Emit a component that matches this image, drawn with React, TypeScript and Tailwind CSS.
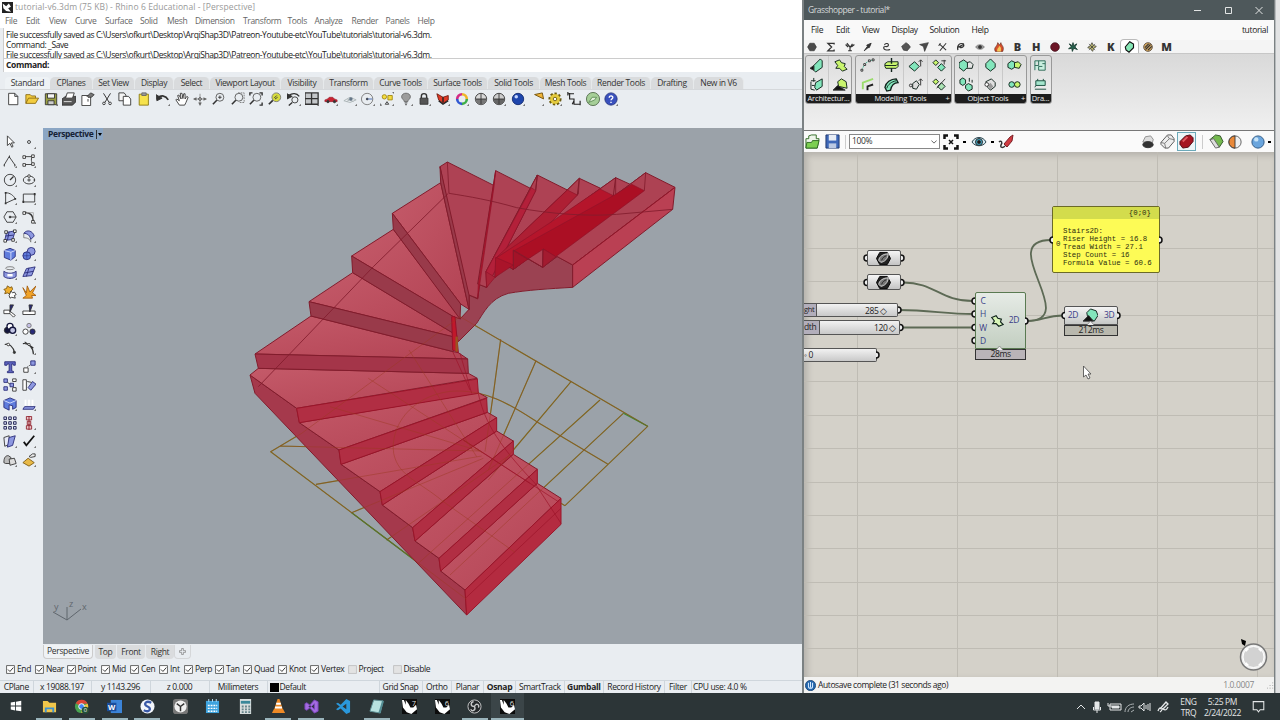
import React from "react";

type Cell = [string, string];

const Svg = ({
  children,
  className = "w-4 h-4",
}: {
  children: React.ReactNode;
  className?: string;
}) => (
  <svg viewBox="0 0 16 16" className={`shrink-0 ${className}`} fill="none" stroke="#333" strokeWidth="1">
    {children}
  </svg>
);

const Corner = () => <path d="M17 12.500V17H12.500Z" fill="#777" stroke="none" />;

const Lens = () => (
  <>
    <circle cx="9" cy="6" r="4.500" stroke="#555" />
    <path d="M5.500 9.500L1 14" strokeWidth="1.800" />
  </>
);

const menuItems: Cell[] = [
  ["File", "w-[21px]"],
  ["Edit", "w-[23px]"],
  ["View", "w-[26px]"],
  ["Curve", "w-[30px]"],
  ["Surface", "w-[35px]"],
  ["Solid", "w-[27px]"],
  ["Mesh", "w-[28px]"],
  ["Dimension", "w-[48px]"],
  ["Transform", "w-[44.500px]"],
  ["Tools", "w-[27px]"],
  ["Analyze", "w-[37px]"],
  ["Render", "w-[34px]"],
  ["Panels", "w-[32px]"],
  ["Help", "w-[24px]"],
];

const toolTabs: Cell[] = [
  ["CPlanes", "w-[43px]"],
  ["Set View", "w-[42px]"],
  ["Display", "w-[39px]"],
  ["Select", "w-[36px]"],
  ["Viewport Layout", "w-[71px]"],
  ["Visibility", "w-[43px]"],
  ["Transform", "w-[50px]"],
  ["Curve Tools", "w-[54px]"],
  ["Surface Tools", "w-[60px]"],
  ["Solid Tools", "w-[52px]"],
  ["Mesh Tools", "w-[52px]"],
  ["Render Tools", "w-[59px]"],
  ["Drafting", "w-[43px]"],
  ["New in V6", "w-[50px]"],
];

const toolbarIcons: React.ReactNode[] = [
  <path d="M3 1.500H10L13.500 5V14.500H3ZM10 1.500V5H13.500" fill="#fff" />,
  <path d="M1 13V3H6L7.500 4.500H12V7M1 13L4 7H15.500L12 13Z" fill="#f2cc3f" stroke="#8d6c14" />,
  <>
    <path d="M1.500 2H14.500V14.500H1.500Z" fill="#9a9f42" />
    <path d="M4 2H12V7H4Z" fill="#f4f4f4" />
    <path d="M4.500 10H11.500V14.500H4.500Z" fill="#ccc" />
    <Corner />
  </>,
  <>
    <path d="M0 8L4 5H16V11L12 15H0Z" fill="#555" />
    <path d="M6 1H14L12 7H4Z" fill="#fff" />
    <path d="M2 11H11" stroke="#eee" />
  </>,
  <>
    <path d="M1 4H11V15.500H1Z" fill="#fff" />
    <path d="M7 5L11 1L15 3L12 6H8Z" fill="#777" />
    <path d="M8 8V11" />
  </>,
  <>
    <path d="M4 1.500L10.500 12M12 1.500L5.500 12" strokeWidth="1.100" />
    <circle cx="4.500" cy="13" r="1.500" />
    <circle cx="11.500" cy="13" r="1.500" />
  </>,
  <>
    <path d="M1 1H7L9 3.500V10H1Z" fill="#f4f4f4" />
    <path d="M6 5H12L14.500 8V15H6Z" fill="#fff" />
  </>,
  <>
    <path d="M2.500 2.500H13V15H2.500Z" fill="#f6e24c" stroke="#87760f" />
    <path d="M5.500 1H10.500V4H5.500Z" fill="#999" stroke="#666" />
  </>,
  <>
    <path d="M2 7C6 3 11 4 14 9" strokeWidth="2" />
    <path d="M0 3L1 10L7 7Z" fill="#333" />
    <Corner />
  </>,
  <path d="M5 15L1 9L2 8L5 10L3 4L4.500 3.500L7 8L6 1.500H8L9 7.500L10 2H11.500L11.500 8L13.500 5L15 6L12.500 12L11 15Z" fill="#fff" />,
  <>
    <path d="M1 8H15M8 2V14" stroke="#888" />
    <path d="M0 8L4 6V10ZM16 8L12 6V10ZM8 16L6 12H10Z" fill="#666" stroke="none" />
    <circle cx="8" cy="8" r="1.500" fill="#eee" />
  </>,
  <>
    <Lens />
    <path d="M7 6H11M9 4V8" />
  </>,
  <>
    <Lens />
    <path d="M8 1H15V12H9" strokeDasharray="2 1" stroke="#777" />
  </>,
  <>
    <Lens />
    <path d="M1 4V1H4M12 1H15V4M15 12V15H12" strokeWidth="1.600" />
  </>,
  <>
    <circle cx="9.500" cy="6" r="5" fill="#d7dc3c" stroke="#777" />
    <path d="M5.500 9.500L1 14" strokeWidth="2" />
    <path d="M7 7L10 4M8 8L11 6" />
  </>,
  <>
    <circle cx="9" cy="9" r="3.500" />
    <path d="M6 12L2 15.500M2 4C6 1 11 1 14 5" strokeWidth="1.500" />
    <path d="M0 2V8L6 5Z" fill="#333" />
    <Corner />
  </>,
  <>
    <path d="M0 1H15V14H0ZM7.500 1V14M0 7.500H15" fill="#c4c7ca" strokeWidth="1.500" />
    <Corner />
  </>,
  <>
    <path d="M1 9L4 8L6 6H10L12 8L15 9V11H1Z" fill="#c82332" stroke="#8a1522" strokeWidth=".6" />
    <circle cx="4.500" cy="11" r="1.300" fill="#333" />
    <circle cx="12" cy="11" r="1.300" fill="#333" />
    <Corner />
  </>,
  <>
    <path d="M1 10L8 6L15 9L8 12ZM5 8L12 11M4 11L11 7" stroke="#aab3b5" />
    <circle cx="9" cy="8" r="2" fill="#678" stroke="none" />
    <Corner />
  </>,
  <>
    <circle cx="7" cy="8" r="6.500" stroke="#777" />
    <path d="M7 8H13" stroke="#3b62b0" />
    <circle cx="7" cy="8" r="1" fill="#3b62b0" />
    <Corner />
  </>,
  <>
    <circle cx="5" cy="5.500" r="2.500" fill="#f4dc3e" stroke="#a08610" />
    <path d="M9 4H14V9H9Z" fill="#f4dc3e" stroke="#a08610" />
    <path d="M14 0H16V2M0 13V15H2M6 14L8 11L10 14Z" />
    <Corner />
  </>,
  <>
    <path d="M6 11C6 9 3 8 3 5.500C3 0 13 0 13 5.500C13 8 10 9 10 11Z" fill="#9c9c9c" stroke="#666" />
    <path d="M6.500 12.500H9.500M7 14.500H9" />
    <Corner />
  </>,
  <>
    <path d="M5 7V4.500C5 1 11 1 11 4.500V7" strokeWidth="1.600" />
    <path d="M3.500 7H12.500V14H3.500Z" fill="#555" />
    <Corner />
  </>,
  <>
    <path d="M1 2L8 6L14 4V9L8 13L3 9Z" fill="#e03a26" stroke="#6e1b10" />
    <path d="M8 6V12M3 10L8 14L14 10" stroke="#222" strokeWidth="1.600" />
    <Corner />
  </>,
  <>
    <path d="M8 2.500A5.500 5.500 0 0 1 13.500 8" stroke="#f0b428" strokeWidth="3" />
    <path d="M13.500 8A5.500 5.500 0 0 1 8 13.500" stroke="#3fae49" strokeWidth="3" />
    <path d="M8 13.500A5.500 5.500 0 0 1 2.500 8" stroke="#3158d2" strokeWidth="3" />
    <path d="M2.500 8A5.500 5.500 0 0 1 8 2.500" stroke="#d32c86" strokeWidth="3" />
    <Corner />
  </>,
  <>
    <circle cx="8" cy="8" r="6.500" fill="#d8d8d8" stroke="#333" />
    <path d="M8 8H14.500A6.500 6.500 0 0 1 1.500 8Z" fill="#777" stroke="none" />
    <path d="M2 8H14M8 2V14" />
  </>,
  <>
    <circle cx="8" cy="8" r="6.500" fill="#ccc" stroke="#333" />
    <path d="M8 8H14.500A6.500 6.500 0 0 1 1.500 8Z" fill="#666" stroke="none" />
    <path d="M2 8H14M8 2V14" />
    <Corner />
  </>,
  <>
    <circle cx="8" cy="8" r="6.500" fill="#1e46ad" stroke="#122a70" />
    <circle cx="6" cy="5.500" r="2" fill="#c6d6ff" stroke="none" />
    <Corner />
  </>,
  <>
    <path d="M6 2H15V9Z" fill="#f2b63a" stroke="#75550e" transform="rotate(-12 10 6)" />
    <Corner />
  </>,
  <>
    <circle cx="8" cy="8" r="6" fill="#e5cb3e" stroke="#6a5a10" strokeWidth="3" strokeDasharray="2.500 2" />
    <circle cx="8" cy="8" r="5.500" fill="#e5cb3e" stroke="none" />
    <circle cx="8" cy="8" r="2" fill="#fff" stroke="#6a5a10" />
    <Corner />
  </>,
  <path d="M1 2H8M3 1V8H8V14H15M1 4V0M8 10L6 14M15 10V15" stroke="#222" strokeWidth="1.300" />,
  <>
    <circle cx="8" cy="8" r="7.500" fill="#a6cf98" stroke="#526b4b" />
    <path d="M3 12L7 6H12L10 9Z" fill="#e5f2df" stroke="#5a8a52" />
  </>,
  <>
    <circle cx="8" cy="8" r="7" fill="#3950bd" stroke="#263580" />
    <path d="M6 6.500C6 3.500 10.500 4 10 6.500C9.500 8 8 8 8 9.500M8 11V12.500" stroke="#fff" strokeWidth="1.600" />
    <Corner />
  </>,
];

const blue = "#8d98e0";
const navy = "#282a78";

const sideIcons: React.ReactNode[] = [
  <path d="M5 1V12L8 9.500L10 14L11.500 13L9.500 9H13Z" fill="#fff" />,
  <>
    <circle cx="8" cy="8" r="1.700" />
    <Corner />
  </>,
  <>
    <path d="M1 13L7 3L14 13" />
    <path d="M1 13h1M7 3h1M13 13h1" strokeWidth="2.500" />
    <Corner />
  </>,
  <>
    <path d="M2 3H12C9 6 12 12 13 12H2" />
    <path d="M1 2h3v3h-3zM11 1h3v3h-3zM1 11h3v3h-3zM11 10h3v3h-3z" fill="#fff" />
    <Corner />
  </>,
  <>
    <circle cx="8" cy="8" r="6.500" />
    <path d="M8 8L12 4" strokeWidth="1.500" />
    <Corner />
  </>,
  <>
    <ellipse cx="8" cy="8" rx="6.500" ry="4.500" />
    <circle cx="8" cy="3.500" r="1.500" fill="#fff" />
    <path d="M8 6V10M6 8H10M13 8h2" />
    <Corner />
  </>,
  <>
    <path d="M3 14V2C8 2 12 5 14 9Z" />
    <path d="M2 14h2M2 2h2M13 9h2" strokeWidth="2" />
    <Corner />
  </>,
  <>
    <path d="M1.500 3.500H14.500V12.500H1.500Z" />
    <path d="M0.500 12.500h2M13.500 3.500h2" strokeWidth="2.500" />
    <Corner />
  </>,
  <>
    <path d="M4.500 2H11.500L15 8L11.500 14H4.500L1 8Z" />
    <path d="M8 8H15" />
    <circle cx="8" cy="8" r="1" fill="#333" />
    <Corner />
  </>,
  <>
    <path d="M2 3C9 2 13 6 13 14" strokeWidth="1.800" />
    <path d="M1 2h3v3h-3zM11 12h3v3h-3z" fill="#fff" />
    <path d="M5 3H13V11" stroke="#aaa" />
    <Corner />
  </>,
  <>
    <path d="M4 4L14 2L11 12L2 13Z" fill={blue} stroke={navy} />
    <path d="M7 3L5 13M3 8L12 7" stroke={navy} />
    <path d="M2 2h3v3h-3zM12 1h3v3h-3zM10 11h3v3h-3zM1 12h3v3h-3z" fill="#fff" />
    <Corner />
  </>,
  <>
    <path d="M2 5C6 0 12 2 14 8L10 12C9 7 6 5 2 5Z" fill={blue} stroke={navy} />
    <path d="M2 5V10C6 10 9 11 10 15V12" stroke="#777" />
    <Corner />
  </>,
  <>
    <path d="M1.500 4L8 1.500L14 4V11L9 15L1.500 12Z" fill="#5f7cdd" stroke={navy} />
    <path d="M1.500 4L9 6L14 4M9 6V15" stroke="#dde3ff" />
    <Corner />
  </>,
  <>
    <circle cx="10.500" cy="5" r="4.500" fill={blue} stroke={navy} />
    <circle cx="5.500" cy="10" r="4.500" fill="#5f7cdd" stroke={navy} />
    <path d="M1 10H10M5.500 5.500V14" stroke={navy} strokeWidth=".6" />
    <Corner />
  </>,
  <>
    <ellipse cx="8" cy="2.500" rx="5" ry="1.700" stroke="#777" />
    <path d="M1 6C5 9 11 9 15 6V12C11 15 5 15 1 12Z" fill={blue} stroke={navy} />
    <path d="M5 10.500H11" stroke="#fff" strokeWidth="3" />
    <Corner />
  </>,
  <>
    <path d="M1 12L5 3L15 1L11 11Z" fill={blue} stroke={navy} />
    <path d="M3 8L13 6M8 2L5 12" stroke={navy} />
    <Corner />
  </>,
  <>
    <path d="M5 1L8 3L10 2L11 5L9 7L10 10H7L5 9L2 10L3 7L1 5L4 4Z" fill="#efaf2e" stroke="#7e560d" />
    <path d="M9 7L11 9L13 8L15 11L13 12L14 15L10 14L8 15L7 12Z" fill="#fff" />
  </>,
  <path d="M1 3L5 9L6 1L9 8L16 1L12 9L16 12L11 12L12 15H1L5 12Z" fill="#f0a227" stroke="#a55f10" />,
  <>
    <path d="M1 7H8V11H1ZM9 9L14 13L12 15L8 11" fill="#fff" />
    <path d="M8 1H12L8 9Z" fill={navy} />
  </>,
  <>
    <path d="M1 8H15V12H1Z" fill="#fff" />
    <path d="M8 1H12L9 9Z" fill={navy} />
  </>,
  <>
    <circle cx="5" cy="9.500" r="3.500" fill="#14163c" />
    <circle cx="8" cy="5" r="3.500" fill="#fff" stroke="#14163c" strokeWidth="1.500" />
    <circle cx="11" cy="9.500" r="3.500" fill="#c3c6e4" stroke="#14163c" strokeWidth="1.500" />
    <Corner />
  </>,
  <>
    <circle cx="8" cy="4" r="2.500" fill="#c3bfe4" stroke="#777" />
    <circle cx="4" cy="11" r="3" fill="#fff" />
    <circle cx="12" cy="11" r="3" fill={navy} />
  </>,
  <>
    <path d="M2 4C7 2 12 7 13 13" strokeWidth="1.300" />
    <circle cx="6" cy="4" r="1.500" fill="#fff" />
    <circle cx="13" cy="13" r="1.300" fill="#333" />
  </>,
  <>
    <path d="M1 3C8 2 13 8 13 15M3 1L13 8" strokeWidth="1.300" />
    <circle cx="8" cy="4" r="1.300" fill="#fff" />
    <Corner />
  </>,
  <path d="M2 2H14V6H12L11.500 4.500H10V12.500L12 13V14.500H5V13L7 12.500V4.500H5L4.500 6H2Z" fill="#5f66c0" stroke={navy} />,
  <>
    <path d="M2 9H7V14H2Z" fill="#fff" />
    <path d="M10 1H15V6H10Z" fill={blue} stroke={navy} />
    <path d="M6 8L9 6" strokeDasharray="1.500 1" />
    <Corner />
  </>,
  <>
    <path d="M1 1H5V5H1ZM8 6H12V10H8ZM1 10H5V14H1Z" fill={blue} stroke={navy} />
    <path d="M11 11H15V15H11ZM11 1H15V4H11Z" fill="#fff" />
    <path d="M5 5L8 7" />
  </>,
  <>
    <path d="M1 2H5V14H1Z" fill="#fff" />
    <path d="M12 4L16 7L10 14L7 11Z" fill={blue} stroke={navy} />
    <path d="M6 4L11 5" />
  </>,
  <>
    <path d="M1 4L8 1L15 4V12L11 14V10L7 9V15L1 12Z" fill="#5f7cdd" stroke={navy} />
    <path d="M1 4L8 7L15 4" stroke="#dde3ff" />
    <Corner />
  </>,
  <>
    <path d="M1 14L3 11H15L13 14Z" fill={blue} stroke={navy} />
    <path d="M4 10V3M8 10V3M12 10V3" stroke="#fff" strokeWidth="2" />
    <Corner />
  </>,
  <path d="M1 1h3v3h-3zM6.500 1h3v3h-3zM12 1h3v3h-3zM1 6.500h3v3h-3zM6.500 6.500h3v3h-3zM12 6.500h3v3h-3zM1 12h3v3h-3zM6.500 12h3v3h-3zM12 12h3v3h-3z" fill="#cdd2f0" stroke="#1c1e4c" />,
  <>
    <path d="M5 0.500H11V4.500H5ZM6 6H10V10H6ZM5 11H11V15H5Z" fill="#e9c6ca" stroke="#90202c" />
    <path d="M8 0V16" stroke="#90202c" />
    <Corner />
  </>,
  <>
    <path d="M1 4L7 2V12L2 14Z" fill="#e7eaf8" />
    <path d="M7 4L14 2L11 13L5 15Z" fill={blue} stroke={navy} />
    <Corner />
  </>,
  <>
    <path d="M2 9L5 13L14 2" stroke="#111" strokeWidth="2" />
    <Corner />
  </>,
  <>
    <path d="M1 11C1 5 3 3 6 3L9 5V12H3Z" fill="#bbb" />
    <path d="M7 7L13 6L15 12L8 14Z" fill="#ddd" />
    <Corner />
  </>,
  <>
    <path d="M1 11L7 6L14 11L8 15Z" fill="#e8b947" stroke="#7d5a14" />
    <path d="M8 4L12 1H15V4L10 5Z" fill="#eee" />
    <Corner />
  </>,
];

const ghTabs: React.ReactNode[] = [
  <path d="M4.500 2H11.500L15 8L11.500 14H4.500L1 8Z" fill="#4a4a4a" />,
  <path d="M13 4V2H3L9 8L3 14H13V12" strokeWidth="2" />,
  <path d="M8 14V8L3 2M8 9L12 3M1 4L5 8M15 4L10 8M5 14H11" strokeWidth="1.900" />,
  <path d="M2 14L7 7L6 5L13 2L10 9L8 9Z" fill="#333" strokeWidth="1.500" />,
  <path d="M4 5C5 1 12 2 10 6C7 9 6 6 3 8C1 12 8 14 13 12" strokeWidth="1.700" />,
  <path d="M1 7L8 1L12 4L15 8L10 14L4 13Z" fill="#555" />,
  <path d="M1 4L15 1L9 15L7 7Z" fill="#4a4a4a" />,
  <path d="M2 3L13 13M13 2L8 8L3 14M1 6L4 2" strokeWidth="1.700" />,
  <path d="M3 13C1 5 6 1 12 3C14 7 9 11 6 8L9 6M2 9L12 4" strokeWidth="1.900" />,
  <>
    <path d="M1 8C4 3 12 3 15 8C12 13 4 13 1 8Z" fill="#999" stroke="#777" />
    <circle cx="8" cy="8" r="2.500" fill="#333" />
  </>,
  <>
    <path d="M2 15C-1 8 5 8 6 1L9 5L11 1C12 6 17 7 14 15Z" fill="#d6502b" stroke="#5c2115" />
    <path d="M5 15C5 9 8 10 8 6C12 9 11 10 11 15Z" fill="#f5c95a" stroke="none" />
  </>,
  "B",
  "H",
  <circle cx="8" cy="8" r="7" fill="#6b1525" stroke="#3c0c16" />,
  <path d="M8 1L9 6L14 3L11 8L15 12L9 10L7 15L6 10L1 11L5 7L2 3L7 6Z" fill="#24614c" stroke="#1e4236" strokeWidth="1.500" />,
  <path d="M8 1L10 5L15 7L11 10L9 15L6 11L1 9L5 6ZM8 2V14M2 8H14M3 3L13 13M13 3L3 13" fill="#eee88a" />,
  "K",
  <path d="M3 8L9 1L14 4V9L8 15L4 12Z" fill="#86e7b6" stroke="#111" strokeWidth="1.500" />,
  <>
    <circle cx="8" cy="8" r="7" fill="#d1a661" stroke="#34251a" />
    <path d="M3 9L9 3M4 12L12 4M8 13L14 7" strokeWidth="1.800" />
  </>,
  "M",
];

const mint = "#83e6bc";
const lime = "#c9f56e";
const ink = "#10231c";

const ribbon = [
  {
    title: "Architectur...",
    width: "w-[47px]",
    plus: false,
    cols: [
      [
        <>
          <path d="M4 8L11 1L13 3V10L6 15L4 13Z" fill={mint} stroke={ink} />
          <path d="M0 11L4 8V13Z" fill="#111" />
        </>,
        <>
          <path d="M6 6L13 2V10L7 14L5 11Z" fill={mint} stroke={ink} />
          <path d="M1 5V13L5 14M4 1V5M1 4H6M2 9H5" stroke={ink} />
        </>,
      ],
      [
        <path d="M2 4L7 2L9 5L13 6L12 9L15 12L10 14L7 11L3 11L5 8Z" fill={lime} stroke={ink} />,
        <>
          <path d="M6 10L5 5L9 2L14 5L15 12Z" fill={lime} stroke={ink} />
          <path d="M0 14L5 9L13 14Z" fill="#111" />
        </>,
      ],
    ],
  },
  {
    title: "Modelling Tools",
    width: "w-[97px]",
    plus: true,
    cols: [
      [
        <>
          <path d="M2 13L5 6L10 3L14 2" stroke="#4bb896" strokeDasharray="2 1" />
          <path d="M1 12h2v2h-2zM4 6h2v2h-2zM9 2h2v2h-2zM13 1h2v2h-2z" fill="#fff" />
        </>,
        <>
          <path d="M3 13V6L14 2" stroke="#9bdc6c" strokeWidth="2" />
          <path d="M8 14V10L14 8" stroke="#222" strokeWidth="2" />
        </>,
      ],
      [
        <>
          <path d="M1 6L4 4H15V9L13 11H2L1 9Z" fill={lime} stroke={ink} />
          <path d="M1 8H13L15 6" stroke={ink} />
          <path d="M8 6V0M8 11V15" stroke={ink} strokeWidth="1.500" />
        </>,
        <>
          <path d="M1 11C2 6 7 2 13 2L15 6C11 6 8 9 7 14L3 15Z" fill={mint} stroke={ink} strokeWidth="1.400" />
          <path d="M3 12C4 8 8 5 13 4" stroke={ink} />
        </>,
      ],
      [
        <>
          <path d="M1 9L7 4L12 9L7 14Z" fill={mint} stroke={ink} />
          <path d="M13.500 9V2M11.500 4L13.500 2L15.500 4" />
        </>,
        <>
          <path d="M5 7L9 4L12 8L9 13L5 12Z" fill="#ddd" stroke={ink} />
          <circle cx="3" cy="9" r="1.500" />
          <path d="M13.500 9V2M11.500 4L13.500 2L15.500 4" />
        </>,
      ],
      [
        <>
          <path d="M1 5L4 2L7 5L4 8Z" fill={lime} stroke={ink} />
          <path d="M6 10L10 6L14 10L10 14Z" fill={mint} stroke={ink} />
          <path d="M13 7V2M10 3H15" />
        </>,
        <>
          <path d="M1 5L4 2L7 5L4 8Z" fill={lime} stroke={ink} />
          <path d="M6 10L10 6L14 10L10 14Z" fill="#ace4b5" stroke={ink} />
          <path d="M5 12L14 2" />
        </>,
      ],
    ],
  },
  {
    title: "Object Tools",
    width: "w-[73px]",
    plus: true,
    cols: [
      [
        <>
          <path d="M8 5L12 4L15 7L14 11L8 11Z" fill="#e5e5e5" stroke={ink} />
          <path d="M0 5L5 2L9 5V10L5 14L0 10Z" fill={mint} stroke={ink} />
        </>,
        <path d="M1 3L4 1L7 3V7L4 9L1 7ZM7 9L10 7L14 9V13L10 15L7 12ZM11 1V5M14 3V6" fill={mint} stroke={ink} />,
      ],
      [
        <path d="M3 6L8 1L13 6V10L8 14L3 10Z" fill={mint} stroke={ink} />,
        <>
          <path d="M3 5L9 2L13 6V10L8 14L5 11Z" fill="#e0e0e0" stroke={ink} />
          <path d="M5 9L8 6L11 10L8 13Z" fill="#999" stroke="none" />
          <circle cx="4" cy="8" r="2" fill="#fff" />
        </>,
      ],
      [
        <>
          <path d="M1 6L5 3L9 5L8 10L5 12L1 10Z" fill={mint} stroke={ink} />
          <path d="M8 5L12 4L15 7L13 11L8 10Z" fill={lime} stroke={ink} />
        </>,
        <>
          <circle cx="5" cy="8" r="3" fill={mint} stroke={ink} />
          <circle cx="11" cy="8" r="3" fill={lime} stroke={ink} />
        </>,
      ],
    ],
  },
  {
    title: "Dra...",
    width: "w-[22px]",
    plus: false,
    cols: [
      [
        <path d="M2 13V3H13V13H6V9H10M2 8H6V3M10 6H13" stroke="#2d6a57" fill="#c9efdf" />,
        <path d="M2 13H14M3 9H13V4H3ZM3 9L2 11M5 4V2M11 4V2" stroke="#174d3d" fill="#a4e5cd" />,
      ],
    ],
  },
];

const outline = "#821c2c";

// stair geometry is drawn at three units per pixel
const upperTreads = [
  "630,50 652,36 793,107 743,445 717,435 717,478",
  "797,62 915,122 770,412 743,402",
  "922,75 1042,135 795,382 768,365",
  "1048,85 1150,133 850,358 797,325",
  "1157,83 1242,122 938,352 852,302",
];

const lowerTreads = [
  "632,98 487,190 692,462 717,478",
  "490,238 365,318 670,500 692,507",
  "368,368 237,455 668,560 667,548",
  "243,498 75,612 713,627 685,608 670,605",
  "85,655 60,675 200,775 742,685 715,670",
  "208,818 327,900 772,743 745,728",
  "333,943 450,1025 800,803 772,787",
  "457,1065 548,1133 850,873 800,843",
  "555,1173 627,1225 922,958 850,913",
  "632,1263 705,1320 993,1045 922,1000",
];

const darkRisers = [
  "630,50 632,98 717,478 717,435",
  "487,190 490,238 690,507 692,462",
  "365,318 368,368 667,548 670,500",
  "237,455 243,498 670,605 668,560",
];

const frontRisers = [
  "200,775 208,818 745,730 742,687",
  "327,900 333,943 772,787 770,745",
  "450,1025 457,1065 800,843 800,803",
  "548,1133 555,1173 850,912 850,873",
  "627,1225 632,1263 922,1000 922,958",
];

const backRisers = [
  "922,75 917,122 770,412 768,365",
  "1048,85 1042,135 795,382 797,330",
  "1157,83 1150,137 850,358 852,300",
  "1247,68 1243,122 938,352 940,297",
];

// back risers showing through the treads in front of them
const overlaps: Cell[] = [
  ["797,62 792,110 743,445 745,402", "#b5182e"],
  ["904,113 917,122 770,412 768,365", "#b3203a"],
  ["1012,120 1042,135 965,215 795,382 797,325", "#ae1f34"],
  ["1110,117 1150,137 1120,160 850,358 797,325 965,215", "#b5152b"],
  ["1150,137 1205,103 1243,122 977,320 940,297 893,328 852,302", "#ab0f24"],
  ["850,302 850,358 893,328", "#a31328"],
  ["940,297 938,352 977,320", "#a31b30"],
  ["797,322 795,382 850,345", "#aa142a"],
  ["768,365 770,412 795,382", "#a82438"],
];

const planLines =
  "M215 850L122 905L710 1348M1005 1067L1253 829L690 500L215 850M812 568L793 710L765 905M918 632L775 960M1023 695L850 900L775 990M1110 750L565 1240M1180 790L660 1275M150 888L750 903M258 1003L755 918M365 1088L760 925M470 1170L840 915M300 770L750 903M415 685L760 910M537 600L740 920M1133 942L920 815C850 770 770 715 660 724C540 740 480 830 491 910C505 980 570 995 640 1055L855 1207M993 1060L1005 1067";

const Stairs = () => (
  <svg viewBox="-561 -66 2277 1548" className="h-full w-full" strokeLinejoin="round">
    <defs>
      <linearGradient id="tread" x1="0" y1="0" x2="1" y2="1">
        <stop offset="0" stopColor="#c45a69" />
        <stop offset="1" stopColor="#b34354" />
      </linearGradient>
    </defs>
    <path d={planLines} fill="none" stroke="#777a28" strokeWidth="3.500" />
    <path d="M365 1088L705 1345M1180 790L1253 829" stroke="#3f8a34" strokeWidth="3.500" />
    <g stroke={outline} strokeWidth="3">
      <path
        d="M1028 345V412C960 416 890 420 835 430C780 445 760 490 740 520L685 575L665 500L692 505L717 478V435L743 447L745 402L768 412V365L795 382V330L850 358V300L938 352L940 297Z"
        fill="#9b4252"
      />
      <path
        d="M60 675L75 730L710 1395L705 1320L632 1263L627 1225L555 1173L548 1133L457 1065L450 1025L333 943L327 900L208 818L200 775Z"
        fill="#a5394c"
      />
      {upperTreads.map((points) => (
        <polygon key={points} points={points} fill="#ae4254" />
      ))}
      {lowerTreads.map((points) => (
        <polygon key={points} points={points} fill="url(#tread)" />
      ))}
      {darkRisers.map((points) => (
        <polygon key={points} points={points} fill="#993a4a" />
      ))}
      <polygon points="75,612 85,655 715,670 713,627" fill="#a43549" />
      {frontRisers.map((points) => (
        <polygon key={points} points={points} fill="#b12e43" stroke="#9c1429" />
      ))}
      <polygon points="705,1320 710,1395 993,1123 993,1045" fill="#b42b40" stroke="#9c1429" />
      {backRisers.map((points) => (
        <polygon key={points} points={points} fill="#ad4051" />
      ))}
      <polygon points="1247,68 1335,112 1028,345 940,297" fill="#ad4253" />
      {overlaps.map(([points, fill]) => (
        <polygon key={points} points={points} fill={fill} stroke="#8f1228" strokeWidth="2" />
      ))}
      <polygon points="665,500 675,500 685,608 668,600" fill="#c1182b" stroke="#97122a" />
      <polygon points="1335,112 1328,178 1028,412 1028,345" fill="#ba4053" />
      <path
        d="M652 36L657 130C720 140 780 150 860 173C960 192 1080 200 1160 193L1328 178M655 130L430 350L85 710M1048 85L1045 133M1157 83V132M1247 68L1243 122M922 75L917 120M850 358V300L938 352V297"
        fill="none"
        strokeWidth="2.500"
      />
      <path
        d="M1028 345L1335 112M705 1346L993 1075M668 605L720 720M690 610L725 730M745 730C760 800 790 870 915 1000L993 1120M700 870L985 1055M700 870L900 1000"
        fill="none"
        stroke="#9c1429"
        strokeWidth="2"
      />
    </g>
    <path d={planLines} fill="none" stroke="#9b3a22" strokeWidth="2.500" opacity=".55" />
    <path d="M680 560V605" stroke="#9a5520" strokeWidth="7" />
  </svg>
);

const osnaps: [string, string, boolean][] = [
  ["End", "w-[29px]", true],
  ["Near", "w-[31.500px]", true],
  ["Point", "w-[34.500px]", true],
  ["Mid", "w-[29px]", true],
  ["Cen", "w-[29px]", true],
  ["Int", "w-[25px]", true],
  ["Perp", "w-[31px]", true],
  ["Tan", "w-[28px]", true],
  ["Quad", "w-[35px]", true],
  ["Knot", "w-[32px]", true],
  ["Vertex", "w-[37.500px]", true],
  ["Project", "w-[45px]", false],
  ["Disable", "w-[45px]", false],
];

const statusCells: Cell[] = [
  ["CPlane", "w-[33.500px]"],
  ["x 19088.197", "w-[58px]"],
  ["y 1143.296", "w-[59px]"],
  ["z 0.000", "w-[59px]"],
  ["Millimeters", "w-[58px]"],
  ["Default", "w-[112px] justify-start! pl-[2px]"],
  ["Grid Snap", "w-[43px]"],
  ["Ortho", "w-[29.500px]"],
  ["Planar", "w-[32px]"],
  ["Osnap", "w-[32px] font-bold"],
  ["SmartTrack", "w-[48.500px]"],
  ["Gumball", "w-[39.500px] font-bold"],
  ["Record History", "w-[61px]"],
  ["Filter", "w-[27px]"],
];

const RhinoWindow = () => (
  <section className="flex w-[802px] flex-col overflow-hidden bg-[#e9edf1]">
    <header className="flex h-[15px] items-center bg-white pl-[2px] text-[#999]">
      <Svg className="h-[11px] w-[11px]">
        <path d="M0 0H16V16H0Z" fill="#222" stroke="none" />
        <path d="M1 2L6 6L10 2L13 7L9 9L13 14L6 13L2 9Z" fill="#fff" stroke="none" />
      </Svg>
      <span className="ml-[2px] tracking-[0.090px]">tutorial-v6.3dm (75 KB) - Rhino 6 Educational - [Perspective]</span>
    </header>
    <nav className="flex h-[13px] items-center bg-white pl-[5px] text-[#666]">
      {menuItems.map(([label, width]) => (
        <span key={label} className={`shrink-0 ${width}`}>
          {label}
        </span>
      ))}
    </nav>
    <div className="ml-[3px] flex h-[31px] flex-col border-b border-l border-[#ccc] bg-white pl-[2px] pt-[1px] tracking-[-0.410px] text-[#222]">
      <p className="h-[10px] leading-[11px]">
        File successfully saved as C:\Users\ofkurt\Desktop\ArqiShap3D\Patreon-Youtube-etc\YouTube\tutorials\tutorial-v6.3dm.
      </p>
      <p className="h-[10px] leading-[11px]">Command: _Save</p>
      <p className="h-[10px] leading-[11px]">
        File successfully saved as C:\Users\ofkurt\Desktop\ArqiShap3D\Patreon-Youtube-etc\YouTube\tutorials\tutorial-v6.3dm.
      </p>
    </div>
    <div className="ml-[3px] flex h-[13px] items-center border-l border-[#ccc] bg-white pl-[2px] font-bold text-[#222]">
      Command:
    </div>
    <div className="mt-[5px] flex h-[13px] border-b border-[#d5d8db] pl-[5px] text-[#333]">
      <span className="flex w-[45px] items-center justify-center rounded-t-sm bg-[#eef2f5]">Standard</span>
      {toolTabs.map(([label, width]) => (
        <span
          key={label}
          className={`flex items-center justify-center rounded-t-[5px] border-r border-[#e6e9eb] bg-[#d9dbdd] ${width}`}
        >
          {label}
        </span>
      ))}
    </div>
    <div className="flex h-[38px] pl-[4px]">
      {toolbarIcons.map((icon, i) => (
        <div key={i} className="flex h-[18px] w-[18.690px] shrink-0 items-center justify-center">
          <Svg className="h-[14px] w-[14px]">{icon}</Svg>
        </div>
      ))}
    </div>
    <div className="flex h-[516px]">
      <aside className="w-[43px] pl-[1px] pt-[5px]">
        <div className="grid auto-rows-[18.700px] grid-cols-[18.500px_18.500px]">
          {sideIcons.map((icon, i) => (
            <div key={i} className="flex items-center justify-center">
              <Svg className="h-[14px] w-[14px]">{icon}</Svg>
            </div>
          ))}
        </div>
      </aside>
      <div className="relative flex-1 bg-[#9ba2a9]">
        <Stairs />
        <div className="absolute left-0 top-0 flex h-[12px] w-[60px] items-center bg-[#8ba6c4] pl-[5px] font-bold text-[#152236]">
          Perspective
          <span className="ml-auto h-[9px] border-l border-[#333]" />
          <span className="mx-px border-x-[2px] border-t-[3px] border-x-transparent border-t-black" />
        </div>
        <svg className="absolute left-[8px] top-[469px] h-[27px] w-[40px]" fill="none" stroke="#5f666d">
          <path d="M16 23V10M16 23L2 15M16 23L30 12" />
          <text x="3" y="13" fontSize="9" stroke="none" fill="#5f666d">y</text>
          <text x="18" y="10" fontSize="9" stroke="none" fill="#5f666d">z</text>
          <text x="31" y="13" fontSize="9" stroke="none" fill="#5f666d">x</text>
        </svg>
      </div>
    </div>
    <div className="flex h-[15px] pl-[43px] pt-[1px] text-[#333]">
      <span className="flex w-[50px] items-center justify-center rounded-b border border-t-0 border-[#ccc] bg-[#eff2f5]">
        Perspective
      </span>
      <span className="ml-[2px] flex w-[21px] items-center justify-center rounded-b bg-[#dadcde]">Top</span>
      <span className="ml-px flex w-[28px] items-center justify-center rounded-b bg-[#dadcde]">Front</span>
      <span className="ml-px flex w-[28px] items-center justify-center rounded-b bg-[#dadcde]">Right</span>
      <span className="flex w-[17px] items-center justify-center rounded-b border border-t-0 border-[#d5d7d9]">
        <Svg className="h-[7px] w-[7px]">
          <path d="M6 1H10V6H15V10H10V15H6V10H1V6H6Z" stroke="#777" strokeWidth="1.500" />
        </Svg>
      </span>
    </div>
    <div className="flex h-[21px] items-center pl-[6px] text-[#222]">
      {osnaps.map(([label, width, on]) => (
        <label key={label} className={`flex shrink-0 items-center gap-[2px] ${width}`}>
          <Svg className="h-[9px] w-[9px]">
            <path d="M1 1H15V15H1Z" fill={on ? "#fff" : "#e3e3e3"} stroke={on ? "#444" : "#bbb"} strokeWidth="1.400" />
            {on && <path d="M3.500 8L7 11.500L13 4.500" strokeWidth="1.700" />}
          </Svg>
          {label}
        </label>
      ))}
    </div>
    <footer className="flex h-[13px] border-t border-[#cfd6dc] text-[#222]">
      {statusCells.map(([label, cls]) => (
        <span
          key={label}
          className={`flex shrink-0 items-center justify-center border-r border-[#cfd6dc] whitespace-nowrap ${cls}`}
        >
          {label === "Default" && <i className="mr-px h-[9px] w-[9px] bg-black" />}
          {label}
        </span>
      ))}
      <span className="flex items-center pl-px">CPU use: 4.0 %</span>
    </footer>
  </section>
);

const HexParam = ({ top }: { top: string }) => (
  <div
    className={`absolute left-[63px] flex h-[16px] w-[34px] items-center justify-center rounded-[2px] border border-[#555] bg-linear-to-b from-[#f6f6f6] to-[#c4c4c4] ${top}`}
  >
    <Svg className="-ml-[2px] h-[15px] w-[15px]">
      <path d="M4 1.500H12L15.500 8L12 14.500H4L0.500 8Z" fill="#222" stroke="#000" />
      <path d="M3 10C3 6 8 3 13 3C13 8 9 12 5 12Z" fill="#777" stroke="#ddd" />
      <path d="M6 10C7 7 9 6 11 5" stroke="#222" />
    </Svg>
  </div>
);

const Canvas = () => (
  <div className="relative h-[525px] overflow-hidden bg-[#d4d1c9] shadow-[inset_3px_3px_6px_rgba(80,80,80,.25)]">
    <svg viewBox="804 152 470 525" className="absolute inset-0 h-full w-full" fill="none">
      <g stroke="#bfbcb4" strokeWidth="1">
        {[857.5, 957.5, 1057.5, 1157.5, 1257.5].map((x) => (
          <path key={x} d={`M${x} 152V677`} />
        ))}
        {Array.from({ length: 15 }, (_, i) => Math.round(181.3 + i * 33.36) + 0.5).map((y) => (
          <path key={y} d={`M804 ${y}H1274`} />
        ))}
      </g>
      <g stroke="#5d6a55" strokeWidth="1.800">
        <path d="M903 282.500C935 282.500 940 301 973 301" />
        <path d="M899 310C930 310 945 314 973 314" />
        <path d="M901 327.500H973" />
        <path d="M1027 321C1082 321 994 240 1051 240" />
        <path d="M1027 321C1042 321 1046 315.500 1063 315.500" />
      </g>
    </svg>
    <HexParam top="top-[98px]" />
    <HexParam top="top-[122px]" />
    <div className="absolute left-0 top-[151px] flex h-[14px] w-[94px] rounded-r-[2px] border border-l-0 border-[#555] bg-linear-to-b from-[#f2f2f2] to-[#c9c9c9] leading-[11px] text-[#222]">
      <span className="w-[13px] border-r border-[#555] bg-[#b2aebb] text-[7.500px]">ght</span>
      <span className="flex-1 pr-[10px] pt-px text-right">285 ◇</span>
    </div>
    <div className="absolute left-0 top-[168px] flex h-[15px] w-[96px] rounded-r-[2px] border border-l-0 border-[#555] bg-linear-to-b from-[#f2f2f2] to-[#c9c9c9] leading-[12px] text-[#222]">
      <span className="w-[16px] border-r border-[#555] bg-[#b2aebb]">dth</span>
      <span className="flex-1 pr-[3px] pt-px text-right">120 ◇</span>
    </div>
    <div className="absolute left-0 top-[196px] h-[14px] w-[73px] rounded-r-[2px] border border-l-0 border-[#555] bg-linear-to-b from-[#f2f2f2] to-[#c9c9c9] leading-[12px] text-[#222]">
      ◦ 0
    </div>
    <div className="absolute left-[171px] top-[140px] w-[51px]">
      <div className="flex h-[57px] items-center rounded-t-[2px] border border-[#5a7a52] bg-linear-to-b from-[#e6ebe6] to-[#c3cfc1] text-[#3a3d86]">
        <div className="flex h-full w-[14px] flex-col justify-around pt-px text-center leading-none">
          <span>C</span>
          <span>H</span>
          <span>W</span>
          <span>D</span>
        </div>
        <Svg className="h-[14px] w-[14px]">
          <path d="M2 4L7 2L9 5L13 6L12 9L15 12L10 14L7 11L3 11L5 8Z" fill="#d8f5b8" stroke={ink} strokeWidth="1.300" />
        </Svg>
        <span className="ml-auto mr-[6px]">2D</span>
      </div>
      <div className="flex h-[11px] items-center justify-center border border-[#333] bg-[#b9b4b8] text-[#222]">28ms</div>
    </div>
    <div className="absolute left-[260px] top-[154px] w-[54px]">
      <div className="flex h-[19px] items-center justify-around rounded-t-[2px] border border-[#555] bg-linear-to-b from-[#f4f4f4] to-[#c6c8c6] text-[#3a3d86]">
        <span>2D</span>
        <Svg className="h-[15px] w-[15px]">
          <path d="M5 10L4 5L8 1L14 3L16 8L12 14Z" fill={mint} stroke={ink} />
          <path d="M0 14L6 8L11 14Z" fill="#111" />
        </Svg>
        <span>3D</span>
      </div>
      <div className="flex h-[11px] items-center justify-center border border-[#333] bg-[#b9b8ae] text-[#222]">212ms</div>
    </div>
    <div className="absolute left-[248px] top-[54px] h-[67px] w-[108px] rounded-[2px] border border-[#6b6a28] bg-[#fdfb56] font-['Liberation_Mono','Courier_New',monospace] text-[7.400px] tracking-normal text-[#2c2c10]">
      <div className="h-[12px] bg-[#d3dc4c] pr-[8px] text-right leading-[13px]">{"{0;0}"}</div>
      <div className="flex pt-[8px]">
        <span className="w-[10px] pt-[13px] pl-[3px] leading-[8px]">0</span>
        <div className="whitespace-nowrap leading-[8px]">
          <p>Stairs2D:</p>
          <p>Riser Height = 16.8</p>
          <p>Tread Width = 27.1</p>
          <p>Step Count = 16</p>
          <p>Formula Value = 60.6</p>
        </div>
      </div>
    </div>
    <svg viewBox="804 152 470 525" className="absolute inset-0 h-full w-full" fill="#eee" stroke="#111" strokeWidth="1.500">
      {[
        [867, 258], [867, 282.5], [975, 301], [975, 314], [975, 327.5], [975, 340.5], [1053, 240], [1065, 315.5],
      ].map(([x, y]) => (
        <path key={`${x}-${y}`} d={`M${x} ${y - 3}A3 3 0 0 0 ${x} ${y + 3}`} />
      ))}
      {[
        [901, 258], [901, 282.5], [898, 310], [900, 327.5], [876, 355], [1025, 321], [1117, 315.5], [1159, 240],
      ].map(([x, y]) => (
        <path key={`${x}-${y}`} d={`M${x} ${y - 3}A3 3 0 0 1 ${x} ${y + 3}`} />
      ))}
      <path d="M996 350L999.500 346L1003 350" fill="#eee" stroke="#777" strokeWidth=".7" />
      <path d="M1087 325L1090.500 321L1094 325" fill="#eee" stroke="#777" strokeWidth=".7" />
      <path d="M1083.500 366V377L1086 375L1088 379L1090 378L1088 374H1091Z" fill="#fff" stroke="#444" strokeWidth=".8" />
      <circle cx="1253.500" cy="657" r="13" fill="#efefef" stroke="#777" />
      <circle cx="1253.500" cy="657" r="10.500" fill="#d2d2d2" stroke="#fff" strokeWidth="1" />
      <path d="M1245 648L1249 649L1246 652ZM1262 648L1258 649L1261 652ZM1245 666L1249 665L1246 662ZM1262 666L1258 665L1261 662Z" fill="#fff" stroke="none" />
      <path d="M1241 639L1246 641L1245 646L1242 644Z" fill="#000" stroke="none" />
    </svg>
  </div>
);

const GrasshopperWindow = () => (
  <section className="flex w-[473px] flex-col overflow-hidden border-l-2 border-r border-[#7b8183] bg-[#e9e9e9]">
    <header className="flex h-[20px] items-center bg-[#4e585b] pl-[4px] text-[#d6d9da]">
      <span className="tracking-[-0.450px]">Grasshopper - tutorial*</span>
      <svg className="ml-auto h-[20px] w-[82px]" fill="none" stroke="#e3e5e5" strokeWidth="1">
        <path d="M2 10.500H9M33.500 7.500H39.500V13.500H33.500ZM63.500 7L70.500 14M70.500 7L63.500 14" />
      </svg>
    </header>
    <nav className="flex h-[20px] items-center bg-[#f9f9f9] pl-[7px] text-[#222]">
      <span className="w-[25px]">File</span>
      <span className="w-[26px]">Edit</span>
      <span className="w-[29.500px]">View</span>
      <span className="w-[38px]">Display</span>
      <span className="w-[42px]">Solution</span>
      <span>Help</span>
      <span className="ml-auto pr-[6px]">tutorial</span>
    </nav>
    <div className="-ml-px flex h-[13px] bg-[#f4f4f4]">
      {ghTabs.map((icon, i) => (
        <div
          key={i}
          className={`flex w-[18.650px] shrink-0 items-center justify-center text-[#333] ${
            i === 17 ? "-mt-px rounded-t border border-b-0 border-[#bbb] bg-white" : ""
          }`}
        >
          {typeof icon === "string" ? (
            <span className="text-[11px] font-extrabold">{icon}</span>
          ) : (
            <Svg className={i === 17 ? "h-[12px] w-[12px]" : "h-[10px] w-[10px]"}>{icon}</Svg>
          )}
        </div>
      ))}
    </div>
    <div className="flex h-[77px] gap-[2.500px] border-t border-[#c7c7c7] bg-linear-to-b from-[#d9d9d9] to-[#f0f0f0] pl-px pt-px">
      {ribbon.map((group) => (
        <div
          key={group.title}
          className={`flex h-[49px] shrink-0 flex-col overflow-hidden rounded-[3px] border border-[#999] bg-linear-to-b from-[#dcdcdc] to-[#f0f0f0] ${group.width}`}
        >
          <div className="flex flex-1 divide-x divide-[#c9c9c9]">
            {group.cols.map((col, i) => (
              <div key={i} className="flex flex-1 flex-col items-center justify-around">
                {col.map((icon, j) => (
                  <Svg key={j} className="h-[15px] w-[15px]">
                    {icon}
                  </Svg>
                ))}
              </div>
            ))}
          </div>
          <div className="flex h-[9px] items-center bg-[#1d1d1d] text-[7.500px] leading-[9px] tracking-[-0.200px] text-[#eee]">
            <span className="flex-1 text-center whitespace-nowrap">{group.title}</span>
            {group.plus && <span className="pr-px">+</span>}
          </div>
        </div>
      ))}
    </div>
    <div className="flex h-[22px] items-center border-t border-[#777] bg-[#fafafa] text-[#333]">
      <Svg className="ml-[1px] h-[15px] w-[15px]">
        <path d="M1 15V5H4V2L7 1H12V5H15L13 15Z" fill="#eef5ea" stroke="#2f6b22" />
        <path d="M1 15L2 9H7L8 7H15L13 15Z" fill="#7ccf51" stroke="#2f6b22" />
      </Svg>
      <Svg className="ml-[5px] h-[15px] w-[15px]">
        <path d="M1 1H15V15H1Z" fill="#3e68b8" stroke="#20396e" />
        <path d="M4 1H12V7H4Z" fill="#e8edf5" stroke="none" />
        <path d="M4 10H12V15H4Z" fill="#bbc9e3" stroke="none" />
      </Svg>
      <span className="ml-[5px] mr-[3px] h-[14px] border-l border-[#ccc]" />
      <div className="flex h-[15px] w-[91px] items-center border border-[#888] bg-white pl-[2px]">
        100%
        <Svg className="ml-auto mr-[2px] h-[6px] w-[6px]">
          <path d="M1 4L8 11L15 4" strokeWidth="2" />
        </Svg>
      </div>
      <Svg className="ml-[3px] h-[16px] w-[16px]">
        <path d="M1.500 5V1.500H5M11 1.500H14.500V5M14.500 11V14.500H11M5 14.500H1.500V11" stroke="#111" strokeWidth="2.500" />
        <path d="M6 6L10 10M10 6L6 10" stroke="#111" strokeWidth="1.500" />
      </Svg>
      <i className="ml-[4px] h-[2px] w-[3px] bg-black" />
      <Svg className="ml-[5px] h-[16px] w-[16px]">
        <path d="M1 8C4 2 12 2 15 8C12 13 4 13 1 8Z" fill="#d5e9f2" stroke="#29454f" />
        <circle cx="8" cy="8" r="3.500" fill="#3ba0bd" />
        <circle cx="8" cy="8" r="1.500" fill="#111" />
      </Svg>
      <i className="ml-[4px] h-[2px] w-[3px] bg-black" />
      <Svg className="ml-[4px] h-[16px] w-[16px]">
        <path d="M1 8C3 6 5 8 3 11C2 14 5 14 7 12" strokeWidth="1.500" />
        <path d="M6 10L12 3L15 1L14 7L9 13Z" fill="#d13b41" stroke="#7a2026" />
      </Svg>
      <div className="ml-auto flex items-center pr-[3px]">
        <Svg className="mr-[5px] h-[14px] w-[14px]">
          <path d="M2 8L5 2L11 1L14 5L13 9Z" fill="#ddd" stroke="#888" />
          <ellipse cx="8" cy="11" rx="6" ry="3.500" fill="#333" />
        </Svg>
        <Svg className="mr-[2px] h-[15px] w-[15px]">
          <path d="M1 9L8 1L12 1L15 5L15 8L9 15L5 15L1 11Z" fill="#eee" stroke="#555" />
          <path d="M1 9L5 10L6 15M8 2L10 5L15 6M5 10L10 5" stroke="#777" />
        </Svg>
        <span className="mr-[6px] flex h-[19px] w-[19px] items-center justify-center border border-[#6ba9b9] bg-[#edf5f7]">
          <Svg className="h-[15px] w-[15px]">
            <path d="M1 11L1 8L7 2L12 1L15 4V8L10 14L4 15Z" fill="#a51521" stroke="#540a12" />
            <path d="M4 8L9 3" stroke="#e05b62" strokeWidth="2" />
          </Svg>
        </span>
        <span className="mr-[6px] h-[14px] border-l border-[#ccc]" />
        <Svg className="mr-[4px] h-[15px] w-[15px]">
          <path d="M1 6L7 1L12 2L15 8L11 14L7 13Z" fill="#74b94e" stroke="#31532a" />
          <path d="M1 6L5 5L11 14L7 15Z" fill="#ddd" stroke="#666" />
        </Svg>
        <Svg className="mr-[9px] h-[14px] w-[14px]">
          <circle cx="8" cy="8" r="7" fill="#eee" stroke="#555" />
          <path d="M8 1A7 7 0 0 0 8 15Z" fill="#e98838" />
        </Svg>
        <Svg className="mr-[3px] h-[14px] w-[14px]">
          <circle cx="8" cy="8" r="7" fill="#6aa5dd" stroke="#28517c" />
          <circle cx="6" cy="5" r="2.500" fill="#c8e4f8" stroke="none" />
        </Svg>
        <i className="h-[2px] w-[3px] bg-black" />
      </div>
    </div>
    <Canvas />
    <footer className="flex h-[16px] items-center bg-[#f3f3f2] pl-px pt-px text-[#222]">
      <Svg className="mr-[2px] h-[11px] w-[11px]">
        <circle cx="8" cy="8" r="7.500" fill="#2467ad" stroke="#173c67" />
        <path d="M5 4V9C5 13 11 13 11 9V4M8 3V11" stroke="#d6eaff" strokeWidth="1.500" />
      </Svg>
      <span className="tracking-[-0.410px]">Autosave complete (31 seconds ago)</span>
      <span className="ml-auto pr-[13px] text-[#888]">1.0.0007</span>
      <Svg className="h-[7px] w-[7px]">
        <path d="M13 1v2M13 7v2M7 7v2M13 13v2M7 13v2M1 13v2" stroke="#999" strokeWidth="2" />
      </Svg>
    </footer>
  </section>
);

const RhinoLogo = ({ version }: { version: string }) => (
  <>
    <path d="M0 0H16V16H0Z" fill="#0c0c0c" stroke="none" />
    <path d="M0 1L2 1L4 6L4 1L7 5L9 9L12 9L15 6L16 11L10 16L5 14L1 9Z" fill="#fff" stroke="none" />
    <text x="10.500" y="7" fontSize="8" fill="#ddd" stroke="none">{version}</text>
  </>
);

const taskIcons: { icon: React.ReactNode; open?: boolean }[] = [
  { icon: <path d="M2 4L7 3V7.500H2ZM8 3L14 2V7.500H8ZM2 8.500H7V13L2 12ZM8 8.500H14V14L8 13Z" fill="#fff" stroke="none" /> },
  {
    icon: (
      <>
        <path d="M1 2H6L8 4H15V14H1Z" fill="#f0c64a" stroke="none" />
        <path d="M3 14V9H13V14H11V11H5V14Z" fill="#3d92d1" stroke="none" />
      </>
    ),
    open: true,
  },
  {
    icon: (
      <>
        <circle cx="8" cy="8" r="7" fill="#48a350" stroke="none" />
        <path d="M8 8L2 4.500A7 7 0 0 1 14.500 5H8Z" fill="#dc4437" stroke="none" />
        <path d="M8 8L14.500 5A7 7 0 0 1 8 15Z" fill="#f3c63c" stroke="none" />
        <circle cx="8" cy="8" r="3" fill="#4285f4" stroke="#fff" />
        <circle cx="12" cy="12" r="3.800" fill="#24523a" stroke="none" />
        <text x="10.300" y="14" fontSize="6" fill="#fff" stroke="none">0</text>
      </>
    ),
    open: true,
  },
  {
    icon: (
      <>
        <path d="M4 1H16V15H4Z" fill="#3c84d8" stroke="none" />
        <path d="M0 4H10V13H0Z" fill="#1a4d9c" stroke="none" />
        <text x="1" y="11.500" fontSize="8" fontWeight="bold" fill="#fff" stroke="none">W</text>
      </>
    ),
    open: true,
  },
  {
    icon: (
      <>
        <circle cx="8" cy="8" r="7.500" fill="#f2f5fa" stroke="none" />
        <path d="M12 4C6 1 3 6 8 8C13 10 10 15 4 12" stroke="#3a5aa8" strokeWidth="2.500" />
      </>
    ),
    open: true,
  },
  {
    icon: (
      <>
        <rect x="0" y="0" width="16" height="16" rx="3" fill="#777" stroke="none" />
        <circle cx="8" cy="8" r="6.500" fill="#f0f0f0" stroke="none" />
        <path d="M8 13V8L4 5M8 8L12 5" strokeWidth="1.600" />
      </>
    ),
  },
  {
    icon: (
      <>
        <path d="M1 2H15V15H1Z" fill="#3ea4df" stroke="none" />
        <path d="M3 7H13M3 10H13M3 13H13" stroke="#fff" strokeDasharray="2 1" strokeWidth="1.500" />
        <path d="M4 0V3M8 0V3M12 0V3" stroke="#bce4fa" />
      </>
    ),
  },
  {
    icon: (
      <>
        <path d="M2 0H14V16H2Z" fill="#d7dddd" stroke="none" />
        <path d="M3 2H13V5H3Z" fill="#39889a" stroke="none" />
        <path d="M4 8H13M4 11H13M4 14H13" stroke="#66858b" strokeDasharray="2 1.500" strokeWidth="2" />
      </>
    ),
  },
  {
    icon: (
      <>
        <path d="M7 0H9L13 12H3Z" fill="#ef8a26" stroke="none" />
        <path d="M5.500 5H10.500M4.300 9H11.700" stroke="#fff" strokeWidth="2" />
        <path d="M1 15L3 11H13L15 15Z" fill="#ef8a26" stroke="none" />
      </>
    ),
    open: true,
  },
  {
    icon: <path d="M1 5L3 4L8 8L3 12L1 11V5ZM5 8L11 1L15 3V13L11 15L5 8M11 5V11L8 8Z" fill="#a36be0" stroke="#7b45bb" fillRule="evenodd" />,
    open: true,
  },
  { icon: <path d="M11 0L15 2V14L11 16L5 10L2 12L0 11L4 8L0 5L2 4L5 6ZM11 5L7 8L11 11Z" fill="#2a98dc" stroke="none" fillRule="evenodd" /> },
  {
    icon: (
      <>
        <path d="M5 1L15 2L12 15L1 13Z" fill="#b7e2e0" stroke="#5f9095" />
        <path d="M11 15L15 2" stroke="#548d94" strokeWidth="2" />
      </>
    ),
    open: true,
  },
  { icon: <RhinoLogo version="7" /> },
  { icon: <RhinoLogo version="6" /> },
  {
    icon: (
      <>
        <circle cx="8" cy="8" r="7" fill="#25292b" stroke="#c7c9ca" />
        <path d="M8 8C3 8 4 3 7 3M8 8C10 3 14 7 12 9M8 8C10 12 5 14 4 11" stroke="#c7c9ca" strokeWidth="1.500" />
      </>
    ),
    open: true,
  },
  { icon: <RhinoLogo version="6" />, open: true },
];

const Taskbar = () => (
  <footer className="flex h-[27px] bg-[#2c3537] text-[#e4e7e8]">
    {taskIcons.map(({ icon, open }, i) => (
      <div
        key={i}
        className={`flex w-[32.750px] shrink-0 flex-col items-center ${i === 15 ? "bg-[#3b4548]" : ""}`}
      >
        <Svg className={`mt-[6px] ${i === 0 ? "h-[14px] w-[14px]" : "h-[15px] w-[15px]"}`}>{icon}</Svg>
        {open && <span className={`mt-auto h-[2px] bg-[#9ab4bb] ${i === 15 ? "w-full" : "w-[26px]"}`} />}
      </div>
    ))}
    <div className="ml-auto flex items-center pr-[15px]">
      <svg className="mr-[7px] h-[18px] w-[98px]" viewBox="0 0 98 18" fill="none" stroke="#e4e7e8" strokeWidth="1">
        <path d="M3 11L7 7L11 11" />
        <path d="M21 4H25V11H21Z" fill="#e4e7e8" />
        <path d="M19.500 9V12H26.500V9M23 12V15" />
        <path d="M36 6H47V12H36ZM34 5V8H38" />
        <path d="M38 8H45V10H38Z" fill="#e4e7e8" />
        <path d="M51 14C51 9 55 6 60 6M54 14C54 11 57 9 60 9M57 14L60 12" stroke="#aab0b2" />
        <path d="M65 8H67L70 5V13L67 10H65ZM72 7V11M74 6V12M76 5V13" />
        <path d="M84 13C86 7 91 10 86 14M86 11L92 4L94 6L89 11C92 13 93 11 94 9" strokeWidth="1.300" />
      </svg>
      <div className="w-[19px] text-center leading-[11px]">
        <p>ENG</p>
        <p>TRQ</p>
      </div>
      <div className="w-[49px] text-center leading-[11px]">
        <p>5:25 PM</p>
        <p>2/24/2022</p>
      </div>
      <Svg className="ml-[5px] h-[13px] w-[13px]">
        <path d="M1.500 2H14.500V12H10L8 14.500L6 12H1.500Z" stroke="#e4e7e8" strokeWidth="1.300" />
      </Svg>
    </div>
  </footer>
);

export default function App() {
  return (
    <div className="flex h-[720px] w-[1280px] flex-col overflow-hidden bg-[#e3e5e7] font-['Open_Sans','Noto_Sans',sans-serif] text-[8.500px] leading-none tracking-[-0.350px]">
      <main className="flex h-[693px]">
        <RhinoWindow />
        <GrasshopperWindow />
        <div className="flex-1 border-l border-[#b7bbbd] bg-[#e2e3e4]" />
      </main>
      <Taskbar />
    </div>
  );
}
